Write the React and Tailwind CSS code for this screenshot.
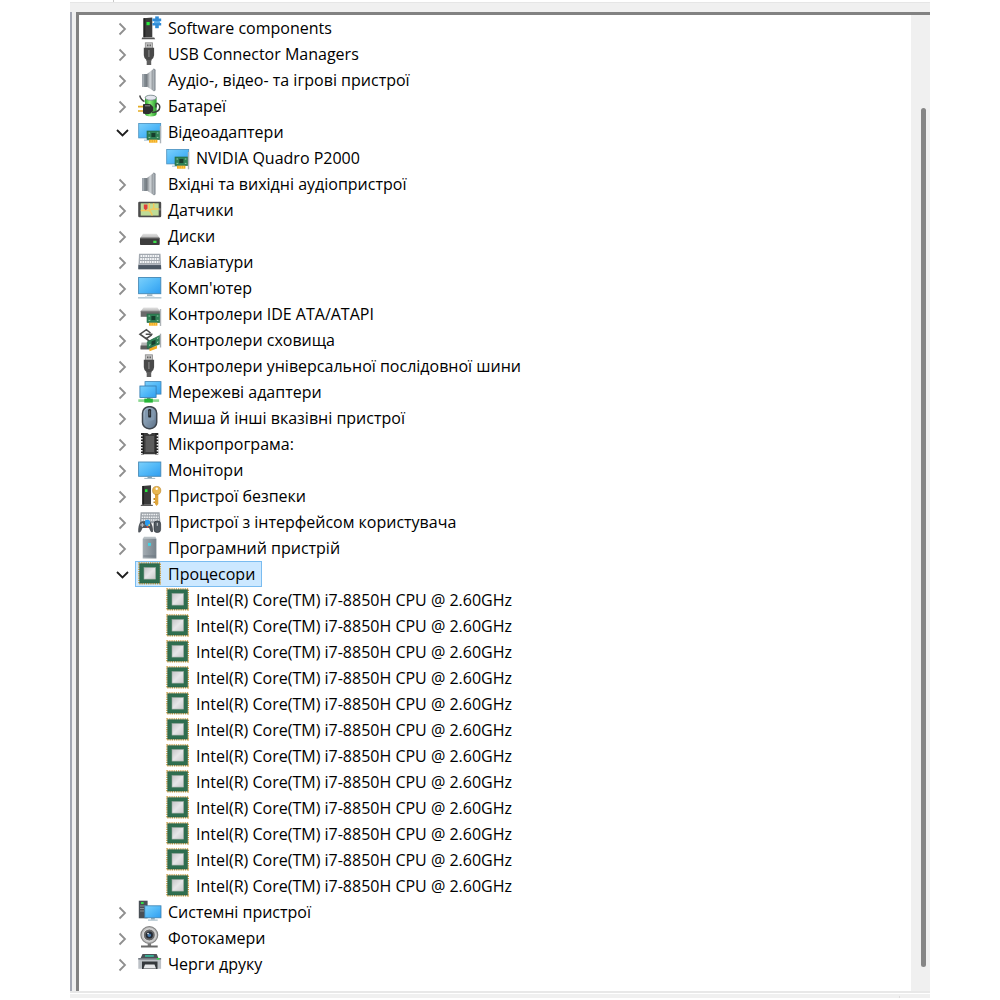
import React, { useState } from 'react';

const Svg = ({ children }) => (
    <svg viewBox="0 0 24 24" className="h-6 w-6 shrink-0" aria-hidden="true">
        {children}
    </svg>
);

// Gradients shared by all the device icons
const IconDefs = () => (
    <svg width="0" height="0" className="absolute" aria-hidden="true">
        <defs>
            <linearGradient id="screen" x1="0" y1="0" x2="1" y2="1">
                <stop offset="0" stopColor="#7cd0fb" />
                <stop offset="0.5" stopColor="#52b9f8" />
                <stop offset="1" stopColor="#2f9df0" />
            </linearGradient>
            <linearGradient id="metal" x1="0" y1="0" x2="1" y2="0">
                <stop offset="0" stopColor="#6f757b" />
                <stop offset="0.5" stopColor="#d3d7da" />
                <stop offset="1" stopColor="#7b8187" />
            </linearGradient>
            <linearGradient id="lid" x1="0" y1="0" x2="0" y2="1">
                <stop offset="0" stopColor="#e4e4e4" />
                <stop offset="1" stopColor="#b4b4b4" />
            </linearGradient>
            <linearGradient id="die" x1="0" y1="0" x2="1" y2="1">
                <stop offset="0" stopColor="#c4c4c6" />
                <stop offset="0.5" stopColor="#e6e6e8" />
                <stop offset="1" stopColor="#c9c9cb" />
            </linearGradient>
            <linearGradient id="cell" x1="0" y1="0" x2="1" y2="0">
                <stop offset="0" stopColor="#2ea52e" />
                <stop offset="0.4" stopColor="#8df07a" />
                <stop offset="1" stopColor="#259a2b" />
            </linearGradient>
            <linearGradient id="mouse" x1="0" y1="0" x2="1" y2="1">
                <stop offset="0" stopColor="#a9bfd3" />
                <stop offset="1" stopColor="#5a6f86" />
            </linearGradient>
            <linearGradient id="box" x1="0" y1="0" x2="1" y2="0">
                <stop offset="0" stopColor="#a4adb3" />
                <stop offset="1" stopColor="#77828a" />
            </linearGradient>
        </defs>
    </svg>
);

const Card = ({ y = 0 }) => (
    <g transform={`translate(0 ${y})`}>
        <rect x="9" y="11" width="13" height="8.6" fill="#2f8055" stroke="#1f6742" strokeWidth="0.6" />
        <rect x="13.4" y="13" width="4" height="4" fill="#173d2c" />
        <path d="M10.5 13h1.6M10.5 17.4h1.8M18.8 13h1.6M18.8 17.4h1.6" stroke="#9fd3b4" strokeWidth="0.9" />
        <rect x="11" y="19.7" width="8.4" height="3" fill="#f3ac1e" />
        <path d="M13.1 20v2.7M15.3 20v2.7M17.4 20v2.7" stroke="#ffdc7a" strokeWidth="0.6" />
        <rect x="21.8" y="6" width="1.4" height="17.3" fill="#aeb4b8" />
    </g>
);

const Software = () => (
    <Svg>
        <path d="M5.5 2.2l8.8-.6v19.6H5.5z" fill="#3d3d3d" />
        <path d="M5.5 2.2h1.8v19H5.5z" fill="#232323" />
        <path d="M4.2 21.6h12l1 1.6H3.6z" fill="#555" />
        <rect x="8.5" y="6" width="3.2" height="3.2" fill="#28e83c" />
        <path d="M17.2.4h3.6v11.8h-3.6z" fill="#2f8bd6" />
        <path d="M14.4 2.6h8.8v2.6h-8.800zM14.400 7h8.800v2.600h-8.800z" fill="#2f8bd6" />
        <path d="M16 5.200h6v2h-6z" fill="#5badea" />
    </Svg>
);

const Usb = () => (
    <Svg>
        <rect x="7.3" y="0.8" width="7.2" height="5.5" fill="#c4c4c4" stroke="#8b8b8b" strokeWidth="0.8" />
        <path d="M9.2 2.6h1.2v1.6H9.2zM11.6 2.6h1.2v1.6h-1.2z" fill="#4d4d4d" />
        <path d="M5.8 5.8h10.3v7.4q-.2 3-2.8 4.8v1H8.5v-1q-2.6-1.8-2.7-4.8z" fill="#494949" />
        <path d="M10.9 8v7" stroke="#858585" strokeWidth="1.2" />
        <rect x="8.7" y="18" width="4.5" height="5" fill="#5e5e5e" />
    </Svg>
);

const Speaker = () => (
    <Svg>
        <path d="M4.2 6h5v13h-5z" fill="#7d858c" />
        <path d="M4.2 6h2v13h-2z" fill="#a4abb1" />
        <path d="M8.4 6.5L16 .6v22.6l-7.6-5z" fill="url(#metal)" />
        <path d="M15.4.8q2.2-.6 2.2 1.4v19.4q0 2-2.2 1.4z" fill="#8b9299" />
        <path d="M15.7 1.5v21" stroke="#c9ced2" strokeWidth="0.7" />
    </Svg>
);

const Battery = () => (
    <Svg>
        <path d="M7 4q0-2.8 5.8-2.8T18.6 4v15.8q0 2.7-5.8 2.7T7 19.8z" fill="url(#cell)" />
        <ellipse cx="12.8" cy="3.7" rx="5.6" ry="2.5" fill="#e4e7ee" stroke="#7c8093" strokeWidth="0.8" />
        <path d="M1.7 1.5Q3 6 6.5 7.5" fill="none" stroke="#444" strokeWidth="1.5" />
        <path d="M14 18.5q7.7-.5 7.8-5.5 0-2-1.5-3-2-1.5-2.3.5v3" fill="none" stroke="#3b3f3b" strokeWidth="1.5" />
        <path d="M0 12.6h6M0 17h6" stroke="#e3ac22" strokeWidth="1.7" />
        <path d="M5 10.2q4-1 7.5 0l2.7 2.8v3.8l-2.7 2.7q-3.5 1.2-7.5 0z" fill="#303030" />
        <path d="M7 11.8h5" stroke="#8d8d8d" />
    </Svg>
);

const Display = () => (
    <Svg>
        <rect x="0.7" y="3.4" width="22" height="14.5" fill="url(#screen)" stroke="#4a8fbd" strokeWidth="0.8" />
        <path d="M6 19.5h5v1.4H6z" fill="#b9cedb" />
        <Card />
    </Svg>
);

const Sensors = () => (
    <Svg>
        <rect x="0.2" y="3.7" width="23" height="15.6" rx="1.2" fill="#4b4b4b" />
        <rect x="2.7" y="5.3" width="18" height="12.3" fill="#bfdc97" />
        <path d="M2.7 12.5h8l4-1.5h6M11.3 5.3v7.4q2 1.500 3 4.800M15.700 5.300v5.600" fill="none" stroke="#f5c85b" strokeWidth="1.5" />
        <path d="M5.8 6.6h3.7v3.8l-1.8 1.8-1.9-1.8z" fill="#e23f3a" />
        <path d="M21.4 10.2h1v2.4h-1z" fill="#999" />
    </Svg>
);

const Disk = () => (
    <Svg>
        <path d="M5 9.7h13.7l3 4.6H2z" fill="url(#lid)" />
        <rect x="2" y="13.8" width="19.7" height="7.3" rx="0.8" fill="#3d3d3d" />
        <path d="M2.2 14.2h19.3" stroke="#777" strokeWidth="0.8" />
        <rect x="15.3" y="16.7" width="3.2" height="2.3" fill="#3fe04c" />
    </Svg>
);

const KeyboardIcon = () => (
    <Svg>
        <path d="M1 3.8h21.5l.7 15.4H.3z" fill="#a3a9b0" />
        <path d="M2.5 6h18.8M2.2 9h19.3M2 12h19.8" stroke="#f4f6f8" strokeWidth="1.8" strokeDasharray="1.7 0.7" />
        <path d="M.4 14.8h22.6l.2 4.4H.3z" fill="#4b5764" />
        <path d="M.4 14.6h22.7" stroke="#c7ccd1" strokeWidth="0.7" />
    </Svg>
);

const Computer = () => (
    <Svg>
        <rect x="0.6" y="1.5" width="22.2" height="16.2" fill="url(#screen)" stroke="#4588b5" strokeWidth="0.9" />
        <path d="M9 18.2h5.4V20H9z" fill="#9fb4c0" />
        <path d="M0 21h23.4v1.6H0z" fill="#b9cbd5" />
        <path d="M7 20.2h9.4v.9H7z" fill="#d8e2e8" />
    </Svg>
);

const Ide = () => (
    <Svg>
        <path d="M5.5 5.5h14L22 9.300H2.700z" fill="url(#lid)" />
        <rect x="2.7" y="9" width="19.5" height="5.8" fill="#6a6a6a" />
        <path d="M2.7 9.2h19.4" stroke="#8f8f8f" strokeWidth="0.8" />
        <Card y={1} />
    </Svg>
);

const Storage = () => (
    <Svg>
        <path d="M3.5 14.5h13L18 21H2.5z" fill="#b5b5b5" />
        <path d="M2.5 17.5h12v4h-12z" fill="#5b5b5b" />
        <path d="M12.5 5L8.4 1.7 2 6.200l6.200 4.500 5.500-3.800M7.700 6.300h6.800M7 9.700l5 4 4-2.500" fill="none" stroke="#fff" strokeWidth="3.4" />
        <path d="M12.5 5L8.4 1.7 2 6.200l6.200 4.500 5.500-3.800M7.700 6.300h6.800M7 9.700l5 4 4-2.500" fill="none" stroke="#4d4d4d" strokeWidth="1.6" />
        <path d="M9.3 13.8l12.3-6.3v8.7L9.3 20.5z" fill="#2f8055" stroke="#1f6742" strokeWidth="0.6" />
        <path d="M13.5 13.5l4-1.8v4.2l-4 1.6z" fill="#193f2e" />
        <path d="M11 17.3l1.5-.6M19 10.5l1.4-.7M19 14.5l1.4-.6" stroke="#b3ddc4" />
        <path d="M11.5 20.5l7.5-2.7v2.8l-7.5 2.6z" fill="#f3ac1e" />
        <path d="M21.8 5.7h1.4v13.8h-1.4z" fill="#a8aeb2" />
    </Svg>
);

const Network = () => (
    <Svg>
        <rect x="7" y="1.6" width="16" height="12.5" fill="url(#screen)" stroke="#3f83b4" strokeWidth="0.8" />
        <rect x="1.9" y="6" width="16.2" height="11.5" fill="url(#screen)" stroke="#3278ad" strokeWidth="0.8" />
        <path d="M9 17.8h3.5v1.7H9z" fill="#6a8392" />
        <rect x="0.3" y="19.3" width="20.8" height="2.6" fill="#8bd891" />
        <rect x="6.3" y="18.6" width="8.5" height="4" fill="#26b637" />
    </Svg>
);

const MouseIcon = () => (
    <Svg>
        <rect x="4.5" y="0.7" width="14.2" height="22" rx="6.5" fill="url(#mouse)" stroke="#3d444c" strokeWidth="1.5" />
        <path d="M7 4.5q4.7-3.5 9.3 0v9q-4.6 2.5-9.3 0z" fill="#8198ae" />
        <rect x="10.2" y="3" width="2.9" height="8.6" rx="1.2" fill="#22272c" />
        <path d="M11.7 4.5v5" stroke="#6f7881" strokeWidth="0.7" />
    </Svg>
);

const Firmware = () => (
    <Svg>
        <path d="M6 1h3.4q2.3 2.8 4.6 0h4v21.3H6z" fill="#3b3b3b" />
        <path d="M7.500 4h8.500v16H7.500z" fill="#5c5c5c" />
        <path d="M4.5 1v21.6M18.8 1v21.6" stroke="#242424" strokeWidth="3" />
        <path d="M3.7 3v19M19.6 3v19" stroke="#f1f1f1" strokeWidth="1.8" strokeDasharray="1.5 1.5" />
    </Svg>
);

const Monitor = () => (
    <Svg>
        <rect x="0.6" y="4" width="22.2" height="14.3" fill="url(#screen)" stroke="#4588b5" strokeWidth="0.9" />
        <path d="M9.5 18.7h4.4v1.2H9.5z" fill="#6f94aa" />
        <path d="M6.3 19.9h10.9V21H6.3z" fill="#a9bfcb" />
    </Svg>
);

const Security = () => (
    <Svg>
        <path d="M4.3 2l8.7-.7v19.4H4.3z" fill="#3b3b3b" />
        <path d="M4.3 2h1.8v18.7H4.3z" fill="#202020" />
        <path d="M3.2 20.8h11.3l.6 1.3H2.5z" fill="#5a5a5a" />
        <rect x="7" y="5.3" width="2.5" height="2.7" fill="#28e83c" />
        <path d="M17 9h3.3v11l-1.7 2-1.6-2z" fill="#e0a63a" />
        <path d="M17 14h-1.5v2H17M17 17.5h-1.5V19H17" fill="#c18a28" />
        <circle cx="18.7" cy="6.5" r="4.1" fill="#e9b750" stroke="#b98222" strokeWidth="0.6" />
        <circle cx="18.7" cy="4.7" r="1.2" fill="#fff" />
    </Svg>
);

const Hid = () => (
    <Svg>
        <path d="M2.6 2.3h19l.9 11H1.8z" fill="#9da3a9" />
        <path d="M4 4.5h16.5M3.7 7.2h17M3.5 9.9h17.4" stroke="#eef0f2" strokeWidth="1.5" strokeDasharray="1.6 0.7" />
        <path d="M2.5 12q5-2 9.8 0 2.7 3 2.8 9.5-2 2.5-4-3.5H4.5Q2.2 24 .2 22q-.2-7 2.3-10z" fill="#51565c" />
        <path d="M4.3 13v4M2.3 15h4" stroke="#bfc4c9" strokeWidth="1.1" />
        <path d="M7 10.5q3-1.5 5 .5v4l-2.5 1.8L7 14.5z" fill="#2b9df0" />
        <circle cx="11.2" cy="15.2" r="0.9" fill="#f0c94b" />
        <circle cx="9.5" cy="17" r="0.9" fill="#d64b40" />
        <rect x="16" y="11" width="6.6" height="11.5" rx="3" fill="#515960" stroke="#2e3439" strokeWidth="0.7" />
        <path d="M19.3 12.8v3" stroke="#cdd2d6" />
    </Svg>
);

const SoftDevice = () => (
    <Svg>
        <path d="M6 .7h11.5l.9 2.2H4.700z" fill="#b9c1c6" />
        <path d="M4.7 2.8h13.7v19.7H4.7z" fill="url(#box)" />
        <path d="M5.4 20h12.3" stroke="#69757d" strokeWidth="0.8" />
        <rect x="10" y="6.9" width="2.9" height="2.9" fill="#3fd5e6" />
    </Svg>
);

const Cpu = () => (
    <Svg>
        <rect x="1" y="1" width="21.2" height="20.8" fill="none" stroke="#c79a3f" strokeWidth="1.6" strokeDasharray="1.3 0.9" />
        <rect x="1.8" y="1.800" width="19.6" height="19.2" fill="#2f6e50" stroke="#245a40" strokeWidth="0.6" />
        <rect x="6" y="5.500" width="11.6" height="11.6" fill="url(#die)" stroke="#9aa89f" strokeWidth="0.6" />
    </Svg>
);

const SystemIcon = () => (
    <Svg>
        <path d="M.8.7h8.8v17.6H.8z" fill="#4a5056" />
        <path d="M2 6h6M2 8.5h4M2 11h4" stroke="#8e959b" strokeWidth="0.9" />
        <rect x="3" y="2" width="2.6" height="2" fill="#30dd45" />
        <rect x="6.8" y="5.8" width="16.2" height="12" fill="url(#screen)" stroke="#3b81b1" strokeWidth="0.8" />
        <path d="M13 18.2h3.8v1.3H13z" fill="#6f94aa" />
        <path d="M10 19.5h9.7v1.2H10z" fill="#a9bfcb" />
    </Svg>
);

const Camera = () => (
    <Svg>
        <path d="M9.7 17h3.4v3H9.7z" fill="#777" />
        <path d="M3 19.5h16.7v2H3z" fill="#686868" />
        <circle cx="11.3" cy="9" r="8.4" fill="#c5c5c5" stroke="#858585" strokeWidth="1.2" />
        <circle cx="11.3" cy="9" r="6" fill="#686868" stroke="#eee" strokeWidth="0.8" />
        <circle cx="11.3" cy="9" r="3.6" fill="#232a35" />
        <circle cx="11.3" cy="9.2" r="1.7" fill="#4379ad" />
        <circle cx="10" cy="7.6" r="0.8" fill="#fff" />
    </Svg>
);

const PrinterIcon = () => (
    <Svg>
        <path d="M4.5 2h14.2l1.7 4H2.7z" fill="#4b5157" />
        <path d="M7 3.2h8.8v1.5H7z" fill="#35c7a4" />
        <path d="M.3 6h22.8v10.8H.3z" fill="#bcc1c6" />
        <path d="M.3 6h22.8v1.6H.3z" fill="#747b82" />
        <rect x="18.8" y="6" width="2.5" height="1.5" fill="#31df49" />
        <path d="M4 9.5h15.5v7.500H4z" fill="#34383c" />
        <path d="M7 12.500h9.500l1.500 4H5.500z" fill="#e4e6e8" />
    </Svg>
);

const cores = Array.from({ length: 12 }, () => 'Intel(R) Core(TM) i7-8850H CPU @ 2.60GHz');

const devices = [
    { name: 'Software components', Icon: Software },
    { name: 'USB Connector Managers', Icon: Usb },
    { name: 'Аудіо-, відео- та ігрові пристрої', Icon: Speaker },
    { name: 'Батареї', Icon: Battery },
    { name: 'Відеоадаптери', Icon: Display, children: ['NVIDIA Quadro P2000'] },
    { name: 'Вхідні та вихідні аудіопристрої', Icon: Speaker },
    { name: 'Датчики', Icon: Sensors },
    { name: 'Диски', Icon: Disk },
    { name: 'Клавіатури', Icon: KeyboardIcon },
    { name: "Комп'ютер", Icon: Computer },
    { name: 'Контролери IDE ATA/ATAPI', Icon: Ide },
    { name: 'Контролери сховища', Icon: Storage },
    { name: 'Контролери універсальної послідовної шини', Icon: Usb },
    { name: 'Мережеві адаптери', Icon: Network },
    { name: 'Миша й інші вказівні пристрої', Icon: MouseIcon },
    { name: 'Мікропрограма:', Icon: Firmware },
    { name: 'Монітори', Icon: Monitor },
    { name: 'Пристрої безпеки', Icon: Security },
    { name: 'Пристрої з інтерфейсом користувача', Icon: Hid },
    { name: 'Програмний пристрій', Icon: SoftDevice },
    { name: 'Процесори', Icon: Cpu, children: cores },
    { name: 'Системні пристрої', Icon: SystemIcon },
    { name: 'Фотокамери', Icon: Camera },
    { name: 'Черги друку', Icon: PrinterIcon },
];

function Label({ Icon, name, selected, onSelect }) {
    return (
        <button
            type="button"
            onClick={onSelect}
            className={`flex h-[26px] items-center gap-1.5 border pr-1.5 pl-0.5 whitespace-nowrap ${
                selected ? 'border-[#7abcf0] bg-[#cce8ff]' : 'border-transparent'
            }`}
        >
            <Icon />
            <span>{name}</span>
        </button>
    );
}

function Group({ device, open, onToggle, selected, onSelect }) {
    const { name, Icon, children = [] } = device;
    return (
        <li>
            <div className="flex items-center gap-1">
                <button type="button" onClick={onToggle} aria-label={name} aria-expanded={open} className="h-[26px] w-4.5">
                    <svg viewBox="0 0 18 26" className="h-[26px] w-4.5" fill="none">
                        {open ? (
                            <path d="M4 11l5.5 5.5L15 11" stroke="#1f1f1f" strokeWidth="1.8" />
                        ) : (
                            <path d="M6.5 8.5L12 14l-5.5 5.5" stroke="#8f8f8f" strokeWidth="1.8" />
                        )}
                    </svg>
                </button>
                <Label Icon={Icon} name={name} selected={selected === name} onSelect={() => onSelect(name)} />
            </div>
            {open && children.length > 0 && (
                <ul className="pl-[50px]">
                    {children.map((child, i) => (
                        <li key={i}>
                            <Label
                                Icon={Icon}
                                name={child}
                                selected={selected === `${child}-${i}`}
                                onSelect={() => onSelect(`${child}-${i}`)}
                            />
                        </li>
                    ))}
                </ul>
            )}
        </li>
    );
}

export default function App() {
    const [open, setOpen] = useState({ 'Відеоадаптери': true, 'Процесори': true });
    const [selected, setSelected] = useState('Процесори');

    return (
        <div className="min-h-screen bg-white px-[70px] font-['Open_Sans','Noto_Sans',sans-serif] text-base text-black">
            <IconDefs />
            <div className="flex h-[3px] border-b border-[#e6e6e6] pl-[43px]">
                <div className="w-px bg-[#c8c8c8]" />
            </div>
            <div className="h-[9px] bg-[#f0f0f0]" />
            <main className="border-l-2 border-[#a3a7b3] bg-[#f0f0f0] pl-1">
                <div className="flex border-t-3 border-l-3 border-[#828282] bg-white">
                    <ul className="min-w-0 grow pb-3.5 pl-[34px]">
                        {devices.map((device) => (
                            <Group
                                key={device.name}
                                device={device}
                                open={!!open[device.name]}
                                onToggle={() => setOpen({ ...open, [device.name]: !open[device.name] })}
                                selected={selected}
                                onSelect={setSelected}
                            />
                        ))}
                    </ul>
                    <div className="flex w-[19px] shrink-0 justify-center bg-[#f0f0f0] pt-[93px] pb-6 pl-1.5">
                        <div className="w-[5px] rounded-full bg-[#868686]" />
                    </div>
                </div>
            </main>
            <div className="h-0.5 bg-[#e8e8e8]" />
            <div className="h-px bg-white" />
            <div className="flex h-1 justify-end bg-[#f0f0f0] pt-0.5 pr-[30px]">
                <div className="w-px bg-[#dcdcdc]" />
            </div>
        </div>
    );
}
